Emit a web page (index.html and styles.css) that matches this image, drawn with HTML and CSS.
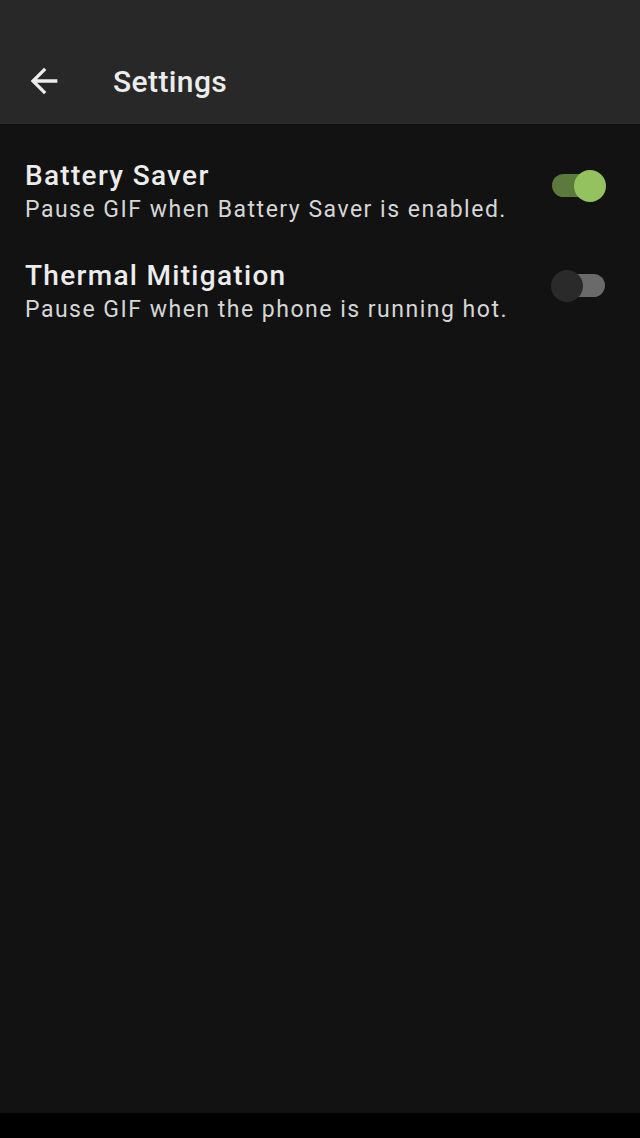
FILE: index.html
```html
<!DOCTYPE html>
<html>
<head>
  <title>Settings</title>
  <link rel="stylesheet" href="styles.css">
</head>
<body>

  <div class="app">
    <header class="toolbar">
      <svg class="back" width="40" height="40" viewBox="0 0 24 24">
        <path d="M20 11H7.83l5.59-5.59L12 4l-8 8 8 8 1.41-1.41L7.83 13H20v-2z" fill="#ececec"/>
      </svg>
      <h1>Settings</h1>
    </header>

    <main class="list">
      <div class="item">
        <div class="text">
          <div class="title">Battery Saver</div>
          <div class="summary">Pause GIF when Battery Saver is enabled.</div>
        </div>
        <div class="switch on"><span class="thumb"></span></div>
      </div>

      <div class="item">
        <div class="text">
          <div class="title">Thermal Mitigation</div>
          <div class="summary">Pause GIF when the phone is running hot.</div>
        </div>
        <div class="switch"><span class="thumb"></span></div>
      </div>
    </main>
  </div>

  <div class="navbar"></div>

</body>
</html>
```

FILE: styles.css
```css
html, body {
  margin: 0;
  height: 100%;
}

body {
  font-family: Roboto, "Noto Sans", sans-serif;
  background-color: #000;
  display: flex;
  flex-direction: column;
}

.app {
  flex: 1;
  background-color: #121212;
  display: flex;
  flex-direction: column;
}

.toolbar {
  height: 124px;
  background-color: #282828;
  display: flex;
  align-items: center;
  padding: 38px 0 0 24px;
  box-sizing: border-box;
}

.toolbar .back {
  display: block;
}

.toolbar h1 {
  margin: 0 0 0 49px;
  font-size: 30px;
  font-weight: 500;
  letter-spacing: 0.4px;
  color: #ececec;
}

.list {
  padding-top: 16px;
}

.item {
  display: flex;
  align-items: center;
  padding: 0 35px 0 25px;
  height: 100px;
}

.item .text {
  flex: 1;
}

.title {
  font-size: 28px;
  font-weight: 500;
  letter-spacing: 1.3px;
  color: #ececec;
  line-height: 39px;
}

.summary {
  font-size: 23px;
  letter-spacing: 1.5px;
  color: #d6d6d6;
  line-height: 30px;
}

.switch {
  position: relative;
  width: 53px;
  height: 23px;
  border-radius: 12px;
  background-color: #6a6a6a;
  margin-bottom: 10px;
}

.switch .thumb {
  position: absolute;
  top: -4px;
  left: -1px;
  width: 32px;
  height: 32px;
  border-radius: 50%;
  background-color: #2a2a2a;
}

.switch.on {
  background-color: #5b7a3c;
}

.switch.on .thumb {
  left: auto;
  right: -1px;
  background-color: #93c25e;
}

.navbar {
  height: 25px;
  background-color: #000;
}
```
